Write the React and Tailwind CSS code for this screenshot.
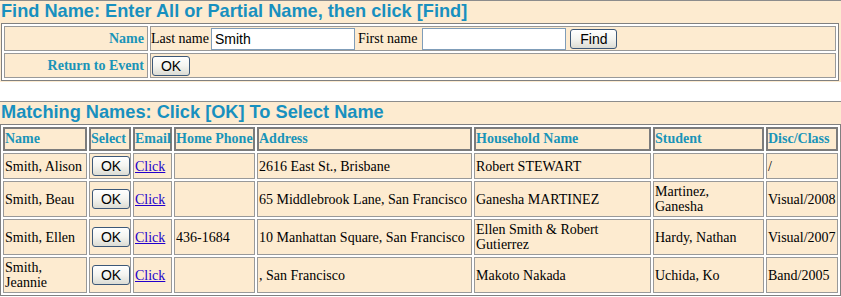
import React from 'react';

const rows = [
    { name: 'Smith, Alison', phone: '', address: '2616 East St., Brisbane', household: 'Robert STEWART', student: '', disc: '/' },
    { name: 'Smith, Beau', phone: '', address: '65 Middlebrook Lane, San Francisco', household: 'Ganesha MARTINEZ', student: ['Martinez,', 'Ganesha'], disc: 'Visual/2008' },
    { name: 'Smith, Ellen', phone: '436-1684', address: '10 Manhattan Square, San Francisco', household: ['Ellen Smith & Robert', 'Gutierrez'], student: 'Hardy, Nathan', disc: 'Visual/2007' },
    { name: ['Smith,', 'Jeannie'], phone: '', address: ', San Francisco', household: 'Makoto Nakada', student: 'Uchida, Ko', disc: 'Band/2005' },
];

const columns = [
    { label: 'Name', w: 'w-[84px]' },
    { label: 'Select', w: 'w-[42px]' },
    { label: 'Email', w: 'w-[39px]' },
    { label: 'Home Phone', w: 'w-[81px]' },
    { label: 'Address', w: 'w-[215px]' },
    { label: 'Household Name', w: 'w-[177px]' },
    { label: 'Student', w: 'w-[111px]' },
    { label: 'Disc/Class', w: 'w-[72px]' },
];

// renders an array as lines split by <br />
const Lines = ({ value }) =>
    Array.isArray(value) ? (
        <>
            {value[0]}
            <br />
            {value[1]}
        </>
    ) : (
        value
    );

const XpButton = ({ children, className = '' }) => (
    <button
        className={`h-[20px] rounded-[3px] border border-[#3d5878] bg-linear-to-b from-white via-[#f4f4f0] to-[#dcdcd4] font-['Liberation_Sans',Arial,sans-serif] text-[14px] leading-none text-black ${className}`}
    >
        {children}
    </button>
);

const SectionHeading = ({ children }) => (
    <div className="h-[23px] border-t border-[#8c8c8c] pl-px font-['Liberation_Sans',Arial,sans-serif] text-[18.2px] font-bold leading-[21px] text-[#1890bf]">
        {children}
    </div>
);

const td = 'border border-[#999] bg-[#fdebd0] px-px py-[2px] align-middle whitespace-nowrap';

const App = () => {
    return (
        <div className="min-h-screen w-[841px] bg-white font-['Liberation_Serif','Times_New_Roman',serif] text-[14px] text-black">
            {/* Find name section */}
            <div className="bg-[#fdebd0] pb-px">
                <SectionHeading>Find Name: Enter All or Partial Name, then click [Find]</SectionHeading>
                <table className="ml-px w-[838px] border-separate border-spacing-[2px] border border-[#808080] bg-white">
                    <tbody>
                        <tr>
                            <td className="h-[25px] w-[144px] border border-[#999] bg-[#fdebd0] px-[3px] py-0 text-right font-bold text-[#1a94b8]">
                                Name
                            </td>
                            <td className="border border-[#999] bg-[#fdebd0] p-0">
                                <div className="flex items-center">
                                    <span>Last name</span>
                                    <input
                                        defaultValue="Smith"
                                        className="ml-[2px] h-[22px] w-[144px] border border-[#7f9db9] bg-white px-[3px] font-['Liberation_Sans',Arial,sans-serif] text-[14px] outline-none"
                                    />
                                    <span className="ml-[3px]">First name</span>
                                    <input className="ml-[5px] h-[22px] w-[144px] border border-[#7f9db9] bg-white px-[3px] font-['Liberation_Sans',Arial,sans-serif] text-[14px] outline-none" />
                                    <XpButton className="ml-[4px] w-[47px]">Find</XpButton>
                                </div>
                            </td>
                        </tr>
                        <tr>
                            <td className="h-[25px] border border-[#999] bg-[#fdebd0] px-[3px] py-0 text-right font-bold text-[#1a94b8]">
                                Return to Event
                            </td>
                            <td className="border border-[#999] bg-[#fdebd0] p-0">
                                <div className="flex items-center">
                                    <XpButton className="ml-px w-[38px]">OK</XpButton>
                                </div>
                            </td>
                        </tr>
                    </tbody>
                </table>
            </div>

            {/* Matching names section */}
            <div className="mt-[19px] bg-[#fdebd0]">
                <SectionHeading>Matching Names: Click [OK] To Select Name</SectionHeading>
                <table className="w-[841px] table-fixed border-separate border-spacing-[2px] border border-[#808080] bg-white">
                    <thead>
                        <tr>
                            {columns.map((c) => (
                                <th
                                    key={c.label}
                                    className={`${c.w} whitespace-nowrap border-2 border-[#7c7c7c] bg-[#fdebd0] px-0 py-[1px] text-left font-bold leading-[18px] text-[#1a94b8]`}
                                >
                                    {c.label}
                                </th>
                            ))}
                        </tr>
                    </thead>
                    <tbody>
                        {rows.map((r, i) => (
                            <tr key={i} className="leading-[15px]">
                                <td className={td}>
                                    <Lines value={r.name} />
                                </td>
                                <td className={`${td} pl-[2px]`}>
                                    <XpButton className="w-[38px]">OK</XpButton>
                                </td>
                                <td className={td}>
                                    <a href="#" className="text-[#2200cc] underline">
                                        Click
                                    </a>
                                </td>
                                <td className={td}>{r.phone}</td>
                                <td className={td}>{r.address}</td>
                                <td className={td}>
                                    <Lines value={r.household} />
                                </td>
                                <td className={td}>
                                    <Lines value={r.student} />
                                </td>
                                <td className={td}>{r.disc}</td>
                            </tr>
                        ))}
                    </tbody>
                </table>
            </div>
        </div>
    );
};

export default App;
